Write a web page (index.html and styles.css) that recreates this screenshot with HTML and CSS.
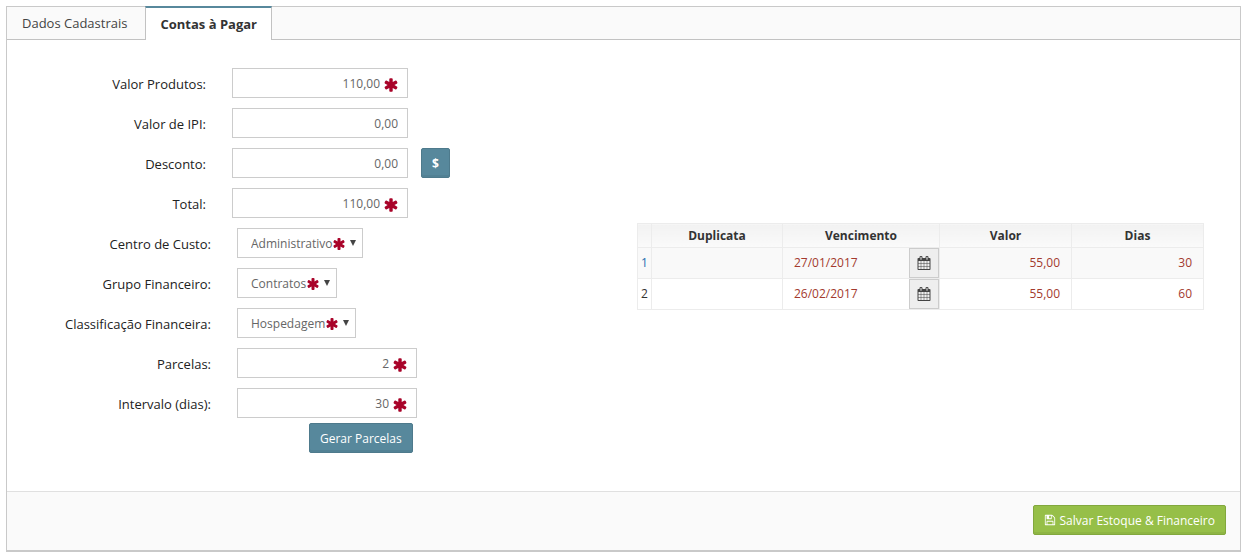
FILE: index.html
```html
<!DOCTYPE html>
<html lang="pt-BR">
<head>
<meta charset="utf-8">
<meta name="viewport" content="width=device-width, initial-scale=1">
<title>Contas à Pagar</title>
<link rel="stylesheet" href="styles.css">
</head>
<body>
<svg class="sprite" aria-hidden="true">
  <symbol id="asterisk" viewBox="0 0 1792 1792"><path d="M1546 1050q46 26 59.500 77.500t-12.500 97.500l-64 110q-26 46-77.500 59.500t-97.500-12.500l-266-153v307q0 52-38 90t-90 38h-128q-52 0-90-38t-38-90v-307l-266 153q-46 26-97.500 12.500t-77.500-59.500l-64-110q-26-46-12.500-97.500t59.500-77.500l266-154-266-154q-46-26-59.500-77.500t12.500-97.500l64-110q26-46 77.500-59.500t97.500 12.500l266 153v-307q0-52 38-90t90-38h128q52 0 90 38t38 90v307l266-153q46-26 97.500-12.500t77.500 59.500l64 110q26 46 12.500 97.500t-59.500 77.500l-266 154z"/></symbol>
  <symbol id="calendar" viewBox="0 0 1792 1792"><path d="M192 1664h288v-288h-288v288zm352 0h320v-288h-320v288zm-352-352h288v-320h-288v320zm352 0h320v-320h-320v320zm-352-384h288v-288h-288v288zm736 736h320v-288h-320v288zm-384-736h320v-288h-320v288zm768 736h288v-288h-288v288zm-384-352h320v-320h-320v320zm-352-864v-288q0-13-9.500-22.500t-22.500-9.500h-64q-13 0-22.500 9.500t-9.500 22.500v288q0 13 9.500 22.500t22.500 9.500h64q13 0 22.500-9.500t9.500-22.500zm736 864h288v-320h-288v320zm-384-384h320v-288h-320v288zm384 0h288v-288h-288v288zm32-480v-288q0-13-9.500-22.500t-22.500-9.500h-64q-13 0-22.500 9.500t-9.500 22.500v288q0 13 9.500 22.500t22.500 9.500h64q13 0 22.500-9.500t9.500-22.500zm384-64v1280q0 52-38 90t-90 38h-1408q-52 0-90-38t-38-90v-1280q0-52 38-90t90-38h128v-96q0-66 47-113t113-47h64q66 0 113 47t47 113v96h384v-96q0-66 47-113t113-47h64q66 0 113 47t47 113v96h128q52 0 90 38t38 90z"/></symbol>
  <symbol id="floppy" viewBox="0 0 1792 1792"><path d="M512 1536h768v-384h-768v384zm896 0h128v-896q0-14-10-38.500t-20-34.500l-281-281q-10-10-34-20t-39-10v416q0 40-28 68t-68 28h-576q-40 0-68-28t-28-68v-416h-128v1280h128v-416q0-40 28-68t68-28h832q40 0 68 28t28 68v416zm-384-928v-320q0-13-9.500-22.500t-22.500-9.500h-192q-13 0-22.500 9.500t-9.500 22.500v320q0 13 9.500 22.500t22.500 9.500h192q13 0 22.500-9.500t9.500-22.500zm640 32v928q0 40-28 68t-68 28h-1344q-40 0-68-28t-28-68v-1344q0-40 28-68t68-28h928q40 0 88 20t76 48l280 280q28 28 48 76t20 88z"/></symbol>
  <symbol id="caret" viewBox="0 0 6 6"><path d="M0 0h6L3 6z"/></symbol>
</svg>
<main class="panel">
  <nav class="tabs">
    <a class="tab" href="#dados">Dados Cadastrais</a>
    <a class="tab tab-active" href="#contas" aria-current="page">Contas à Pagar</a>
  </nav>
  <form class="panel-form">
    <div class="panel-body">
      <div class="fields">
        <div class="group group-values">
          <label for="produtos">Valor Produtos:</label>
          <div class="field"><input class="text required" id="produtos" type="text" value="110,00"><svg class="star"><use href="#asterisk"/></svg></div>
          <label for="ipi">Valor de IPI:</label>
          <div class="field"><input class="text" id="ipi" type="text" value="0,00"></div>
          <label for="desconto">Desconto:</label>
          <div class="field-row">
            <div class="field"><input class="text" id="desconto" type="text" value="0,00"></div>
            <button class="btn btn-money" type="button">$</button>
          </div>
          <label for="total">Total:</label>
          <div class="field"><input class="text required" id="total" type="text" value="110,00"><svg class="star"><use href="#asterisk"/></svg></div>
        </div>
        <div class="group group-finance">
          <label for="centro">Centro de Custo:</label>
          <div class="pick"><select id="centro"><option>Administrativo</option></select><svg class="star"><use href="#asterisk"/></svg><svg class="caret"><use href="#caret"/></svg></div>
          <label for="grupo">Grupo Financeiro:</label>
          <div class="pick"><select id="grupo"><option>Contratos</option></select><svg class="star"><use href="#asterisk"/></svg><svg class="caret"><use href="#caret"/></svg></div>
          <label for="classificacao">Classificação Financeira:</label>
          <div class="pick"><select id="classificacao"><option>Hospedagem</option></select><svg class="star"><use href="#asterisk"/></svg><svg class="caret"><use href="#caret"/></svg></div>
          <label for="parcelas">Parcelas:</label>
          <div class="field"><input class="text required" id="parcelas" type="text" value="2"><svg class="star"><use href="#asterisk"/></svg></div>
          <label for="intervalo">Intervalo (dias):</label>
          <div class="field"><input class="text required" id="intervalo" type="text" value="30"><svg class="star"><use href="#asterisk"/></svg></div>
        </div>
        <div class="generate"><button class="btn" type="button">Gerar Parcelas</button></div>
      </div>
      <table class="installments">
        <colgroup><col class="col-index"><col class="col-dup"><col class="col-date"><col class="col-value"><col class="col-days"></colgroup>
        <thead>
          <tr><th></th><th>Duplicata</th><th>Vencimento</th><th>Valor</th><th>Dias</th></tr>
        </thead>
        <tbody>
          <tr>
            <td class="index index-current">1</td><td></td>
            <td><div class="date"><span>27/01/2017</span><button class="btn-date" type="button" aria-label="Escolher data"><svg><use href="#calendar"/></svg></button></div></td>
            <td class="number">55,00</td><td class="number">30</td>
          </tr>
          <tr>
            <td class="index">2</td><td></td>
            <td><div class="date"><span>26/02/2017</span><button class="btn-date" type="button" aria-label="Escolher data"><svg><use href="#calendar"/></svg></button></div></td>
            <td class="number">55,00</td><td class="number">60</td>
          </tr>
        </tbody>
      </table>
    </div>
    <footer class="panel-footer">
      <button class="btn btn-save" type="submit"><svg><use href="#floppy"/></svg>Salvar Estoque &amp; Financeiro</button>
    </footer>
  </form>
</main>
</body>
</html>
```

FILE: styles.css
```css
* { box-sizing: border-box; }

body {
  margin: 0;
  padding: 6px 8px 7px 6px;
  background: #fff;
  color: #222;
  font: 13px/20px "Open Sans", "Noto Sans", sans-serif;
}

button, input, select { font-family: inherit; }
svg { display: block; fill: currentColor; }
.sprite { display: none; }

.panel {
  border: 1px solid #c9c9c9;
  border-bottom-width: 2px;
}

/* Tabs */
.tabs {
  display: flex;
  height: 33px;
  border-bottom: 1px solid #c2c2c2;
  background: #fafafa;
}
.tab {
  padding: 6px 18px 6px 15px;
  color: #444;
  text-decoration: none;
}
.tab-active {
  height: 34px;
  margin-top: -1px;
  padding: 6px 14px;
  border: 1px solid #c2c2c2;
  border-top: 2px solid #57889c;
  border-bottom: 0;
  background: #fff;
  color: #333;
  font-weight: 700;
}

.panel-body {
  display: grid;
  grid-template-columns: 10fr 9fr;
  align-items: center;
  padding: 28px 36px 38px 0;
}

/* Form fields */
.fields {
  display: flex;
  flex-direction: column;
}
.group {
  display: grid;
  grid-auto-rows: 30px;
  align-items: center;
  gap: 10px 26px;
  margin-bottom: 10px;
}
.group-values { grid-template-columns: 199px 1fr; }
.group-finance {
  grid-template-columns: 204px 1fr;
  margin-bottom: 5px;
}
.group label {
  padding-top: 2px;
  text-align: right;
}
.field {
  position: relative;
  width: 176px;
}
.group-finance .field { width: 180px; }
.field-row {
  display: flex;
  gap: 13px;
}
.text {
  display: block;
  width: 100%;
  height: 30px;
  padding: 0 9px;
  border: 1px solid #ccc;
  border-radius: 0;
  background: #fff;
  color: #666;
  font-size: 12px;
  text-align: right;
}
.text.required { padding-right: 27px; }
.star {
  position: absolute;
  width: 16px;
  height: 16px;
  color: #a90329;
  pointer-events: none;
}
.field .star {
  top: 9px;
  right: 9px;
}
.pick {
  position: relative;
  justify-self: start;
}
.pick select {
  appearance: none;
  display: block;
  height: 30px;
  padding: 0 29px 0 13px;
  border: 1px solid #ccc;
  border-radius: 0;
  background: #fff;
  color: #666;
  font-size: 12px;
}
.pick .star {
  top: 9px;
  right: 17px;
  width: 14px;
  height: 14px;
}
.caret {
  position: absolute;
  top: 12px;
  right: 7px;
  width: 6px;
  height: 6px;
  color: #444;
  pointer-events: none;
}

/* Buttons */
.btn {
  height: 30px;
  padding: 0 10px;
  border: 1px solid #4e7a8c;
  border-radius: 2px;
  background: #57889c;
  box-shadow: inset 0 -2px 0 rgba(0, 0, 0, 0.05);
  color: #fff;
  font-size: 12px;
  font-weight: 500;
}
.btn-money { font-weight: 700; }
.generate { padding-left: 302px; }
.btn-save {
  display: flex;
  align-items: center;
  gap: 3px;
  border-color: #82a83d;
  background: #96bf48;
  font-weight: 400;
}
.btn-save svg {
  width: 12px;
  height: 12px;
}

/* Installments table */
.installments {
  width: 100%;
  margin-top: 12px;
  border-collapse: collapse;
  table-layout: fixed;
  color: #a33a2e;
  font-size: 12px;
}
.col-index { width: 14px; }
.col-dup { width: 131px; }
.col-date { width: 157px; }
.installments th, .installments td {
  padding: 0;
  border: 1px solid #ececec;
}
.installments th {
  height: 24px;
  background: linear-gradient(#f2f2f2, #fafafa);
  color: #333;
  font-weight: 700;
}
.installments td { height: 31px; }
.installments tbody tr:first-child { background: #f9f9f9; }
.installments .index {
  color: #333;
  text-align: center;
}
.installments .index-current { color: #1f6fb0; }
.installments .number {
  padding-right: 11px;
  text-align: right;
}
.date {
  display: flex;
  justify-content: space-between;
  align-items: center;
  padding-left: 11px;
}
.btn-date {
  display: flex;
  align-items: center;
  justify-content: center;
  width: 30px;
  height: 30px;
  padding: 0;
  border: 1px solid #ccc;
  background: #eee;
  color: #444;
}
.btn-date svg {
  width: 14px;
  height: 14px;
}

.panel-footer {
  display: flex;
  justify-content: flex-end;
  padding: 13px 14px 15px;
  border-top: 1px solid #e0e0e0;
  background: #fafafa;
}
```
